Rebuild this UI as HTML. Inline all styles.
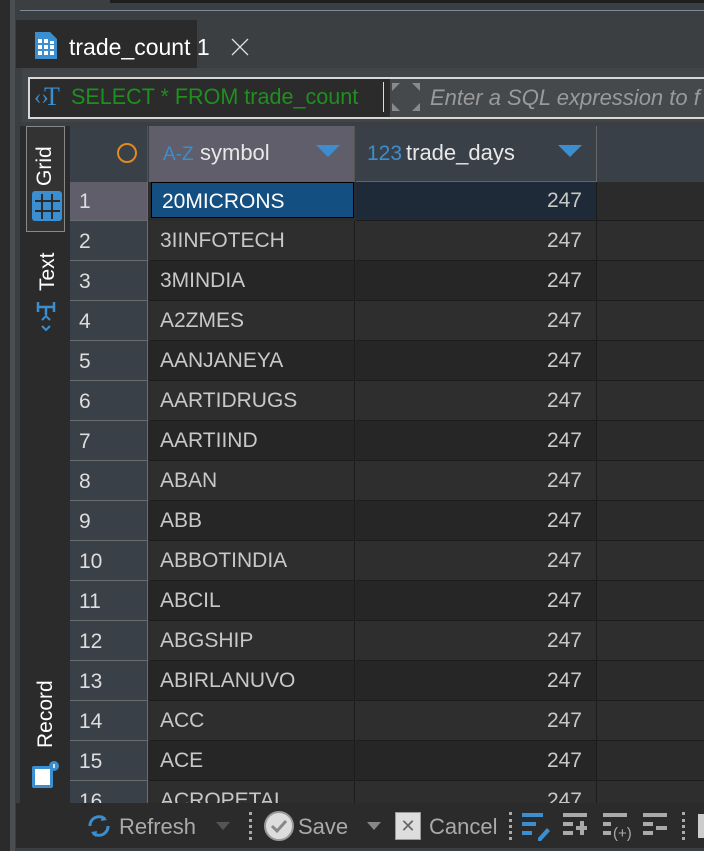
<!DOCTYPE html>
<html><head><style>
*{margin:0;padding:0;box-sizing:border-box}
body{width:704px;height:851px;background:#3c3f41;position:relative;overflow:hidden;font-family:"Liberation Sans",sans-serif;}
.a{position:absolute}
.row{position:absolute;left:70px;width:634px;height:40px;font-size:21px;color:#c8c8c8}
.num{position:absolute;left:0;top:0;width:78px;height:40px;background:#3a4047;border-bottom:1px solid #6a6d70;border-right:1px solid #6a6d70;padding:9px 0 0 9px;color:#ddd}
.sym{position:absolute;left:80px;top:0;width:205px;height:40px;border-right:1px solid #1c1c1c;border-bottom:1px solid #1c1c1c;padding:8px 0 0 10px}
.val{position:absolute;left:286px;top:0;width:241px;height:40px;border-right:1px solid #1c1c1c;border-bottom:1px solid #1c1c1c;text-align:right;padding:8px 14px 0 0}
.rest{position:absolute;left:527px;top:0;width:107px;height:40px;border-bottom:1px solid #1c1c1c}
.c{white-space:nowrap}
</style></head><body>
<div class="a" style="left:0;top:0;width:10px;height:851px;background:#2b2b2b"></div>
<div class="a" style="left:10px;top:0;width:5px;height:851px;background:#4a4e50"></div>
<div class="a" style="left:110px;top:0;width:594px;height:3px;background:#1e1e1e"></div>
<div class="a" style="left:20px;top:10px;width:684px;height:1px;background:#7d8a99"></div>
<div class="a" style="left:16px;top:18px;width:688px;height:833px;background:#3c3f41"></div>
<div class="a" style="left:16px;top:20px;width:181px;height:48px;background:#2b2b2b"></div>
<svg class="a" style="left:33px;top:31px" width="26" height="30" viewBox="0 0 26 30"><path d="M2 1h15l7 7v20H2z" fill="#3b8fd0"/><g fill="#fff"><rect x="5" y="8" width="4" height="4"/><rect x="11" y="8" width="4" height="4"/><rect x="17" y="10" width="4" height="3"/><rect x="5" y="14" width="4" height="4"/><rect x="11" y="14" width="4" height="4"/><rect x="17" y="14" width="4" height="4"/><rect x="5" y="20" width="4" height="4"/><rect x="11" y="20" width="4" height="4"/><rect x="17" y="20" width="4" height="4"/></g></svg>
<div class="a c" style="left:69px;top:34px;font-size:23px;color:#fff">trade_count 1</div>
<svg class="a" style="left:231px;top:38px" width="18" height="18"><path d="M1 1L17 17M17 1L1 17" stroke="#ddd" stroke-width="1.3"/></svg>
<div class="a" style="left:22px;top:68px;width:682px;height:54px;background:#414548"></div>
<div class="a" style="left:28px;top:77px;width:680px;height:42px;border:2px solid #d8d8d8;background:#46494b"></div>
<div class="a" style="left:30px;top:79px;width:360px;height:38px;background:#2b2b2b"></div>
<div class="a" style="left:383px;top:82px;width:1px;height:30px;background:#ddd"></div>
<div class="a" style="left:34px;top:84px;font-size:22px;color:#3b8fd0;font-family:'Liberation Serif',serif">‹›</div>
<div class="a" style="left:44px;top:82px;font-size:26px;color:#3b8fd0;font-family:'Liberation Serif',serif">T</div>
<div class="a c" style="left:71px;top:84px;font-size:22px;color:#1f8f1f;transform:scaleX(0.98);transform-origin:left top">SELECT * FROM trade_count</div>
<svg class="a" style="left:391px;top:82px" width="30" height="30"><g fill="#8a8a8a"><path d="M1 1h8l-8 8z"/><path d="M29 1h-8l8 8z"/><path d="M1 29h8l-8-8z"/><path d="M29 29h-8l8-8z"/></g></svg>
<div class="a c" style="left:430px;top:85px;font-size:22px;color:#9a9a9a;font-style:italic">Enter a SQL expression to f</div>
<div class="a" style="left:20px;top:126px;width:50px;height:680px;background:#2b2b2b"></div>
<div class="a" style="left:26px;top:126px;width:39px;height:106px;border:1px solid #888;background:#333"></div>
<div class="a" style="left:33px;top:186px;font-size:21px;color:#fff;transform:rotate(-90deg);transform-origin:left top;">Grid</div>
<svg class="a" style="left:31px;top:190px" width="32" height="32"><rect x="1" y="1" width="30" height="30" rx="3" fill="#3b8fd0"/><g stroke="#2b2b2b" stroke-width="2"><path d="M11 4v25M21 4v25M4 11h25M4 21h25"/></g></svg>
<div class="a" style="left:36px;top:291px;font-size:21px;color:#fff;transform:rotate(-90deg);transform-origin:left top;">Text</div>
<svg class="a" style="left:36px;top:300px" width="22" height="32"><path d="M2 2v10M2 7h16M18 2v10M10 7v8" stroke="#3b8fd0" stroke-width="2.5" fill="none"/><path d="M6 20l4-4 4 4M6 26l4 4 4-4" stroke="#3b8fd0" stroke-width="2" fill="none"/></svg>
<div class="a" style="left:34px;top:748px;font-size:21px;color:#fff;transform:rotate(-90deg);transform-origin:left top;">Record</div>
<svg class="a" style="left:31px;top:760px" width="32" height="30"><rect x="1" y="6" width="21" height="22" rx="2" fill="#3b8fd0"/><rect x="4" y="9" width="15" height="16" fill="#fff"/><circle cx="23" cy="6" r="5" fill="#3b8fd0"/><path d="M23 4v4" stroke="#fff" stroke-width="1.5"/></svg>
<div class="a" style="left:70px;top:126px;width:634px;height:56px;background:#3a4047"></div>
<div class="a" style="left:70px;top:126px;width:78px;height:56px;background:#3a4047;border-right:1px solid #555"></div>
<div class="a" style="left:117px;top:143px;width:20px;height:20px;border:2px solid #e08a20;border-radius:50%"></div>
<div class="a" style="left:149px;top:126px;width:206px;height:56px;background:#5f5e6a;border-right:1px solid #555"></div>
<div class="a c" style="left:163px;top:144px;font-size:19px;color:#3b8fd0">A-Z</div>
<div class="a c" style="left:200px;top:140px;font-size:22px;color:#e8e8e8">symbol</div>
<svg class="a" style="left:316px;top:145px" width="24" height="12"><path d="M0 0h24L12 12z" fill="#3b8fd0"/></svg>
<div class="a" style="left:356px;top:126px;width:241px;height:56px;border-right:1px solid #666;border-bottom:1px solid #666"></div>
<div class="a c" style="left:367px;top:142px;font-size:21px;color:#3b8fd0">123</div>
<div class="a c" style="left:406px;top:140px;font-size:22px;color:#e8e8e8">trade_days</div>
<svg class="a" style="left:558px;top:145px" width="24" height="12"><path d="M0 0h24L12 12z" fill="#3b8fd0"/></svg>
<div class="a" style="left:70px;top:182px;width:634px;height:621px;overflow:hidden">
<div style="position:relative;top:-182px">
<div class="row" style="top:181px;left:0;background:#2b2b2b"><div class="num" style="background:#5f5e6a">1</div><div class="sym" style="background:#134f80;border:1px solid #000;color:#fff;top:1px;left:81px;width:203px;height:36px;padding-top:7px">20MICRONS</div><div class="val" style="background:#1f2a38">247</div><div class="rest"></div></div>
<div class="row" style="top:221px;left:0;background:#2e2e2e"><div class="num">2</div><div class="sym">3IINFOTECH</div><div class="val">247</div><div class="rest"></div></div>
<div class="row" style="top:261px;left:0;background:#262626"><div class="num">3</div><div class="sym">3MINDIA</div><div class="val">247</div><div class="rest" style="background:#2b2b2b"></div></div>
<div class="row" style="top:301px;left:0;background:#2e2e2e"><div class="num">4</div><div class="sym">A2ZMES</div><div class="val">247</div><div class="rest"></div></div>
<div class="row" style="top:341px;left:0;background:#262626"><div class="num">5</div><div class="sym">AANJANEYA</div><div class="val">247</div><div class="rest" style="background:#2b2b2b"></div></div>
<div class="row" style="top:381px;left:0;background:#2e2e2e"><div class="num">6</div><div class="sym">AARTIDRUGS</div><div class="val">247</div><div class="rest"></div></div>
<div class="row" style="top:421px;left:0;background:#262626"><div class="num">7</div><div class="sym">AARTIIND</div><div class="val">247</div><div class="rest" style="background:#2b2b2b"></div></div>
<div class="row" style="top:461px;left:0;background:#2e2e2e"><div class="num">8</div><div class="sym">ABAN</div><div class="val">247</div><div class="rest"></div></div>
<div class="row" style="top:501px;left:0;background:#262626"><div class="num">9</div><div class="sym">ABB</div><div class="val">247</div><div class="rest" style="background:#2b2b2b"></div></div>
<div class="row" style="top:541px;left:0;background:#2e2e2e"><div class="num">10</div><div class="sym">ABBOTINDIA</div><div class="val">247</div><div class="rest"></div></div>
<div class="row" style="top:581px;left:0;background:#262626"><div class="num">11</div><div class="sym">ABCIL</div><div class="val">247</div><div class="rest" style="background:#2b2b2b"></div></div>
<div class="row" style="top:621px;left:0;background:#2e2e2e"><div class="num">12</div><div class="sym">ABGSHIP</div><div class="val">247</div><div class="rest"></div></div>
<div class="row" style="top:661px;left:0;background:#262626"><div class="num">13</div><div class="sym">ABIRLANUVO</div><div class="val">247</div><div class="rest" style="background:#2b2b2b"></div></div>
<div class="row" style="top:701px;left:0;background:#2e2e2e"><div class="num">14</div><div class="sym">ACC</div><div class="val">247</div><div class="rest"></div></div>
<div class="row" style="top:741px;left:0;background:#262626"><div class="num">15</div><div class="sym">ACE</div><div class="val">247</div><div class="rest" style="background:#2b2b2b"></div></div>
<div class="row" style="top:781px;left:0;background:#2e2e2e"><div class="num">16</div><div class="sym">ACROPETAL</div><div class="val">247</div><div class="rest"></div></div>
</div></div>
<div class="a" style="left:16px;top:803px;width:688px;height:48px;background:#2b2b2b"></div>
<div class="a" style="left:16px;top:848px;width:688px;height:3px;background:#3c3f41"></div>
<svg class="a" style="left:85px;top:812px" width="28" height="28"><path d="M5 14a9 9 0 0 1 15-7M23 14a9 9 0 0 1-15 7" stroke="#3b8fd0" stroke-width="3" fill="none"/><path d="M17 3l5 5-6 1z M11 25l-5-5 6-1z" fill="#3b8fd0"/></svg>
<div class="a c" style="left:119px;top:814px;font-size:22px;color:#aaa">Refresh</div>
<svg class="a" style="left:216px;top:822px" width="14" height="8"><path d="M0 0h14L7 8z" fill="#555"/></svg>
<div class="a" style="left:249px;top:812px;width:3px;height:28px;border-left:3px dotted #aaa"></div>
<div class="a" style="left:264px;top:811px;width:30px;height:30px;border-radius:50%;background:#ddd;border:2px solid #999"></div>
<svg class="a" style="left:268px;top:816px" width="22" height="20"><path d="M4 10l5 5 9-10" stroke="#888" stroke-width="3" fill="none"/></svg>
<div class="a c" style="left:298px;top:814px;font-size:22px;color:#aaa">Save</div>
<svg class="a" style="left:367px;top:822px" width="14" height="8"><path d="M0 0h14L7 8z" fill="#888"/></svg>
<div class="a" style="left:395px;top:812px;width:26px;height:28px;background:#ddd;border:1px solid #999;color:#666;font-size:18px;text-align:center;line-height:26px">✕</div>
<div class="a c" style="left:429px;top:814px;font-size:22px;color:#aaa">Cancel</div>
<div class="a" style="left:509px;top:812px;width:3px;height:28px;border-left:3px dotted #aaa"></div>
<svg class="a" style="left:522px;top:812px" width="30" height="30"><g fill="#3b8fd0"><rect x="0" y="1" width="21" height="4"/><rect x="0" y="10" width="14" height="4"/><rect x="0" y="19" width="10" height="4"/><path d="M16 26l9-10 3 3-9 10h-3z"/></g></svg>
<svg class="a" style="left:563px;top:812px" width="30" height="30"><g fill="#aaa"><rect x="0" y="1" width="24" height="4"/><rect x="0" y="10" width="10" height="4"/><rect x="0" y="19" width="10" height="4"/><rect x="13" y="14" width="11" height="4"/><rect x="17" y="9" width="4" height="14"/></g></svg>
<svg class="a" style="left:603px;top:812px" width="30" height="30"><g fill="#aaa"><rect x="0" y="1" width="24" height="4"/><rect x="0" y="10" width="8" height="4"/><rect x="0" y="19" width="8" height="4"/></g><text x="10" y="26" font-size="15" fill="#aaa" font-family="Liberation Sans">(+)</text></svg>
<svg class="a" style="left:643px;top:812px" width="30" height="30"><g fill="#aaa"><rect x="0" y="1" width="24" height="4"/><rect x="0" y="10" width="10" height="4"/><rect x="0" y="19" width="10" height="4"/><rect x="13" y="14" width="11" height="4"/></g></svg>
<div class="a" style="left:682px;top:812px;width:3px;height:28px;border-left:3px dotted #aaa"></div>
<div class="a" style="left:698px;top:814px;width:6px;height:24px;background:#ccc"></div>
</body></html>
